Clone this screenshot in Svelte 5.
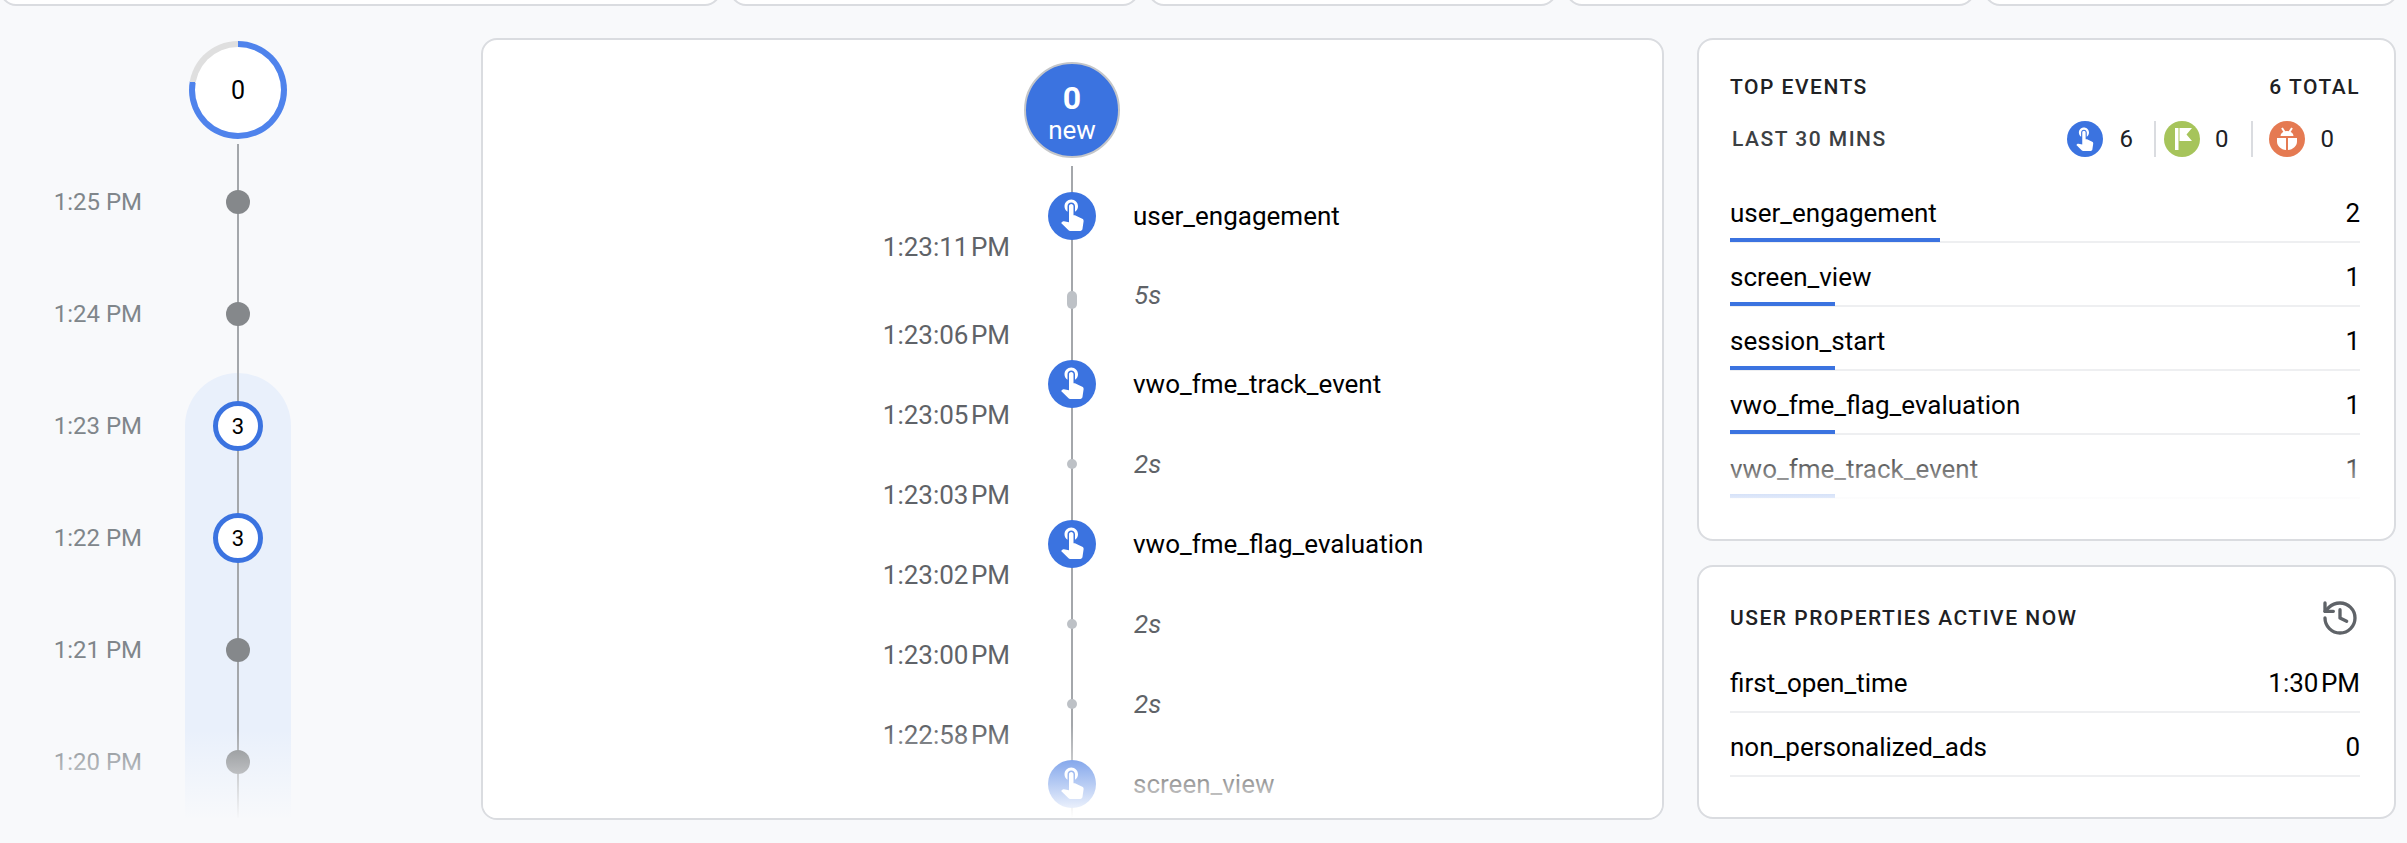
<script lang="ts">
    const minutes = [
        { time: "1:25 PM", count: 0 },
        { time: "1:24 PM", count: 0 },
    ];
    const activeMinutes = [
        { time: "1:23 PM", count: 3 },
        { time: "1:22 PM", count: 3 },
        { time: "1:21 PM", count: 0 },
        { time: "1:20 PM", count: 0 },
    ];
    const stream = [
        { kind: "event", name: "user_engagement", time: "1:23:11 PM" },
        { kind: "gap", name: "5s", time: "1:23:06 PM", long: true },
        { kind: "event", name: "vwo_fme_track_event", time: "1:23:05 PM" },
        { kind: "gap", name: "2s", time: "1:23:03 PM" },
        { kind: "event", name: "vwo_fme_flag_evaluation", time: "1:23:02 PM" },
        { kind: "gap", name: "2s", time: "1:23:00 PM" },
        { kind: "gap", name: "2s", time: "1:22:58 PM" },
        { kind: "event", name: "screen_view", time: "" },
    ];
    const topEvents = [
        { name: "user_engagement", count: 2 },
        { name: "screen_view", count: 1 },
        { name: "session_start", count: 1 },
        { name: "vwo_fme_flag_evaluation", count: 1 },
        { name: "vwo_fme_track_event", count: 1 },
    ];
    const touchPath = "M9 11.24V7.5C9 6.12 10.12 5 11.5 5S14 6.12 14 7.5v3.74c1.21-.81 2-2.18 2-3.74C16 5.01 13.99 3 11.5 3S7 5.01 7 7.5c0 1.56.79 2.93 2 3.74zm9.84 4.63l-4.54-2.26c-.17-.07-.35-.11-.54-.11H13v-6c0-.83-.67-1.5-1.5-1.5S10 6.67 10 7.5v10.74l-3.43-.72c-.08-.01-.15-.03-.24-.03-.31 0-.59.13-.79.33l-.79.8 4.94 4.94c.27.27.65.44 1.06.44h6.79c.75 0 1.33-.55 1.44-1.28l.75-5.27c.01-.07.02-.14.02-.2 0-.62-.38-1.16-.91-1.38z";
</script>

{#snippet minuteRow(m)}
    <div class="minute">
        <span class="minute-time">{m.time}</span>
        <span class="minute-rail">
            {#if m.count > 0}
                <span class="minute-count">{m.count}</span>
            {:else}
                <span class="minute-dot"></span>
            {/if}
        </span>
    </div>
{/snippet}

<main>
    <div class="stat-strip">
        <div class="stat wide"></div>
        <div class="stat"></div>
        <div class="stat"></div>
        <div class="stat"></div>
        <div class="stat last"></div>
    </div>

    <div class="columns">
        <section class="minutes">
            <div class="ring"><span class="ring-inner">0</span></div>
            {#each minutes as m}
                {@render minuteRow(m)}
            {/each}
            <div class="active-group">
                {#each activeMinutes as m}
                    {@render minuteRow(m)}
                {/each}
            </div>
            <div class="fade fade-page"></div>
        </section>

        <section class="card stream">
            <div class="stream-head">
                <div class="new-badge">
                    <strong>0</strong>
                    <span>new</span>
                </div>
            </div>
            {#each stream as row, i}
                <div class="stream-row" class:long={row.long} class:first={i === 0}>
                    <span class="stream-time">{row.time}</span>
                    <span class="stream-rail">
                        {#if row.kind === "event"}
                            <span class="event-icon">
                                <svg viewBox="0 0 24 24" width="36" height="36"><path d={touchPath} fill="#fff" /></svg>
                            </span>
                        {:else}
                            <span class="gap-mark" class:pill={row.long}></span>
                        {/if}
                    </span>
                    {#if row.kind === "event"}
                        <span class="event-name">{row.name}</span>
                    {:else}
                        <span class="gap-name">{row.name}</span>
                    {/if}
                </div>
            {/each}
            <div class="fade fade-card"></div>
        </section>

        <aside class="side">
            <section class="card top-events">
                <div class="card-title">
                    <span>TOP EVENTS</span>
                    <span>6 TOTAL</span>
                </div>
                <div class="sub-row">
                    <span class="sub-label">LAST 30 MINS</span>
                    <div class="tallies">
                        <span class="tally-icon blue">
                            <svg class="touch" viewBox="0 0 24 24" width="27" height="27"><path d={touchPath} fill="#fff" /></svg>
                        </span>
                        <span class="tally-num n1">6</span>
                        <span class="tally-sep"></span>
                        <span class="tally-icon green">
                            <svg viewBox="0 0 36 36" width="36" height="36"><path d="M11 7h3.5v22H11z M15.5 7H28l-5.5 6.5L28 20H15.5z" fill="#fff" /></svg>
                        </span>
                        <span class="tally-num n2">0</span>
                        <span class="tally-sep s2"></span>
                        <span class="tally-icon orange">
                            <svg viewBox="0 0 36 36" width="36" height="36">
                                <path d="M13 7l2.6 4M23 7l-2.6 4" stroke="#fff" stroke-width="2" fill="none" />
                                <path d="M11.5 15a6.5 5 0 0 1 13 0z M8 17h9v12c-5-.3-9-4-9-8.5z M28 17h-9v12c5-.3 9-4 9-8.5z" fill="#fff" />
                            </svg>
                        </span>
                        <span class="tally-num n3">0</span>
                    </div>
                </div>
                <div class="rows">
                    {#each topEvents as ev}
                        <div class="row">
                            <span>{ev.name}</span>
                            <span>{ev.count}</span>
                            <span class="row-bar" style="width: {(ev.count / 6) * 100}%"></span>
                        </div>
                    {/each}
                    <div class="fade fade-rows"></div>
                </div>
            </section>

            <section class="card user-props">
                <div class="card-title props-title">
                    <span>USER PROPERTIES ACTIVE NOW</span>
                    <svg viewBox="0 0 24 24" width="40" height="40" fill="none" stroke="#5f6368" stroke-width="2" stroke-linecap="round" stroke-linejoin="round">
                        <path d="M3 12a9 9 0 1 0 9-9 9.75 9.75 0 0 0-6.74 2.74L3 8" />
                        <path d="M3 3v5h5" />
                        <path d="M12 7v5l4 2" />
                    </svg>
                </div>
                <div class="row">
                    <span>first_open_time</span>
                    <span class="tight">1:30 PM</span>
                </div>
                <div class="row">
                    <span>non_personalized_ads</span>
                    <span>0</span>
                </div>
            </section>
        </aside>
    </div>
</main>

<style>
    :global(body) {
        margin: 0;
        background: #f8f9fb;
    }
    main {
        width: 2407px;
        height: 843px;
        overflow: hidden;
        font-family: Roboto, "Liberation Sans", sans-serif;
        font-size: 26px;
        color: #202124;
    }

    .stat-strip {
        display: flex;
        align-items: flex-end;
        gap: 9px;
        height: 6px;
        overflow: hidden;
    }
    .stat {
        flex: 0 0 409px;
        height: 40px;
        box-sizing: border-box;
        background: #fff;
        border: 2px solid #dadce0;
        border-radius: 16px;
    }
    .stat.wide {
        flex-basis: 721px;
    }
    .stat.last {
        flex-basis: 414px;
    }

    .columns {
        display: flex;
        padding-top: 32px;
    }

    .card {
        box-sizing: border-box;
        background: #fff;
        border: 2px solid #dadce0;
        border-radius: 16px;
    }
    .fade {
        position: absolute;
        pointer-events: none;
    }

    /* minute timeline */
    .minutes {
        position: relative;
        flex: 0 0 481px;
        height: 782px;
        padding-top: 3px;
        box-sizing: border-box;
        font-size: 24px;
    }
    .ring {
        display: flex;
        align-items: center;
        justify-content: center;
        width: 98px;
        height: 98px;
        margin: 0 0 7px 189px;
        border-radius: 50%;
        background: conic-gradient(#4f83ec 0 280deg, #dfdfdf 280deg 360deg);
    }
    .ring-inner {
        display: flex;
        align-items: center;
        justify-content: center;
        width: 86px;
        height: 86px;
        border-radius: 50%;
        background: #fff;
        color: #000;
        font-size: 25px;
    }
    .minute {
        display: flex;
        align-items: center;
        height: 112px;
    }
    .minute-time {
        width: 142px;
        text-align: right;
        color: #80868b;
    }
    .minute-rail {
        position: relative;
        display: flex;
        align-items: center;
        justify-content: center;
        width: 192px;
        height: 100%;
    }
    .minute-rail::before {
        content: "";
        position: absolute;
        left: 95px;
        top: -2px;
        bottom: 0;
        width: 2px;
        background: #a4a7ab;
    }
    .minute-dot {
        position: relative;
        width: 24px;
        height: 24px;
        border-radius: 50%;
        background: #85888b;
    }
    .minute-count {
        position: relative;
        display: flex;
        align-items: center;
        justify-content: center;
        box-sizing: border-box;
        width: 50px;
        height: 50px;
        border: 5px solid #3b73e0;
        border-radius: 50%;
        background: #fff;
        color: #000;
        font-size: 22px;
    }
    .active-group {
        position: relative;
    }
    .active-group::before {
        content: "";
        position: absolute;
        left: 185px;
        top: 3px;
        bottom: 0;
        width: 106px;
        border-radius: 53px 53px 0 0;
        background: #e9f0fb;
    }
    .active-group .minute {
        position: relative;
    }
    .fade-page {
        left: 0;
        right: 0;
        top: 692px;
        height: 90px;
        background: linear-gradient(rgba(248, 249, 251, 0), #f8f9fb);
    }

    /* event stream */
    .stream {
        position: relative;
        flex: 0 0 1183px;
        height: 782px;
        padding-top: 22px;
        overflow: hidden;
    }
    .stream-head {
        display: flex;
        justify-content: center;
        width: 48px;
        margin: 0 0 18px 565px;
    }
    .new-badge {
        flex: none;
        display: flex;
        flex-direction: column;
        align-items: center;
        justify-content: center;
        box-sizing: border-box;
        width: 96px;
        height: 96px;
        padding-top: 7px;
        border: 2px solid #c4c6c9;
        border-radius: 50%;
        background: #3b73e0;
        color: #fff;
        line-height: 32px;
    }
    .new-badge strong {
        font-size: 32px;
        font-weight: 700;
    }
    .stream-row {
        display: grid;
        grid-template-columns: 528px 48px 1fr;
        column-gap: 37px;
        height: 80px;
    }
    .stream-row.long {
        height: 88px;
    }
    .stream-time {
        align-self: end;
        height: 18px;
        margin-right: 1px;
        line-height: 18px;
        text-align: right;
        color: #5f6368;
        word-spacing: -4px;
    }
    .stream-rail {
        position: relative;
        display: flex;
        align-items: center;
        justify-content: center;
    }
    .stream-rail::before {
        content: "";
        position: absolute;
        left: 23px;
        top: 0;
        bottom: 0;
        width: 2px;
        background: #a4a7ab;
    }
    .stream-row.first .stream-rail::before {
        top: -10px;
    }
    .event-icon {
        position: relative;
        display: flex;
        align-items: center;
        justify-content: center;
        width: 48px;
        height: 48px;
        border-radius: 50%;
        background: #3b73e0;
    }
    .event-icon svg {
        margin: 0 1px 6px 0;
    }
    .gap-mark {
        position: relative;
        width: 10px;
        height: 10px;
        border-radius: 5px;
        background: #bdc1c6;
    }
    .gap-mark.pill {
        height: 18px;
    }
    .event-name {
        align-self: center;
        color: #000;
    }
    .gap-name {
        align-self: center;
        margin: 0 0 1px 1px;
        font-style: italic;
        color: #5f6368;
    }
    .stream-row.long .gap-name {
        margin-bottom: 10px;
    }
    .fade-card {
        left: 0;
        right: 0;
        top: 685px;
        bottom: 0;
        background: linear-gradient(rgba(255, 255, 255, 0), #fff);
    }

    /* right column */
    .side {
        flex: 0 0 699px;
        margin-left: 33px;
        display: flex;
        flex-direction: column;
        gap: 24px;
    }
    .top-events,
    .user-props {
        padding: 0 34px 40px 31px;
    }
    .top-events {
        padding-top: 33px;
    }
    .user-props {
        padding-top: 31px;
    }
    .card-title {
        display: flex;
        align-items: center;
        justify-content: space-between;
        height: 28px;
        font-size: 21px;
        font-weight: 500;
        letter-spacing: 1.5px;
        color: #202124;
    }
    .props-title {
        height: 40px;
        margin-bottom: 11px;
    }
    .sub-row {
        display: flex;
        align-items: center;
        justify-content: space-between;
        height: 36px;
        margin: 20px 0 22px;
    }
    .sub-label {
        margin-left: 2px;
        font-size: 21px;
        font-weight: 500;
        letter-spacing: 1.5px;
        color: #3c4043;
    }
    .tallies {
        display: flex;
        align-items: center;
        margin-right: 26px;
        font-size: 24px;
    }
    .tally-icon {
        display: flex;
        align-items: center;
        justify-content: center;
        width: 36px;
        height: 36px;
        border-radius: 50%;
    }
    .tally-icon .touch {
        margin-bottom: 4px;
    }
    .tally-icon.blue {
        background: #3b73e0;
    }
    .tally-icon.green {
        background: #a6c45b;
    }
    .tally-icon.orange {
        background: #e57a52;
    }
    .tally-num {
        margin: 0 21px 0 17px;
    }
    .tally-num.n2 {
        margin: 0 22px 0 15px;
    }
    .tally-num.n3 {
        margin: 0 0 0 16px;
    }
    .tally-sep {
        width: 2px;
        height: 36px;
        margin-right: 8px;
        background: #dadce0;
    }
    .tally-sep.s2 {
        margin-right: 16px;
    }
    .rows {
        position: relative;
    }
    .row {
        position: relative;
        box-sizing: border-box;
        display: flex;
        justify-content: space-between;
        height: 64px;
        padding-top: 20px;
        line-height: 28px;
        border-bottom: 2px solid #eeeff1;
        color: #000;
    }
    .row-bar {
        position: absolute;
        left: 0;
        bottom: -1px;
        height: 4px;
        background: #3b73e0;
    }
    .tight {
        word-spacing: -4px;
    }
    .fade-rows {
        left: 0;
        right: 0;
        top: 258px;
        height: 72px;
        background: linear-gradient(rgba(255, 255, 255, 0), #fff);
    }
</style>
